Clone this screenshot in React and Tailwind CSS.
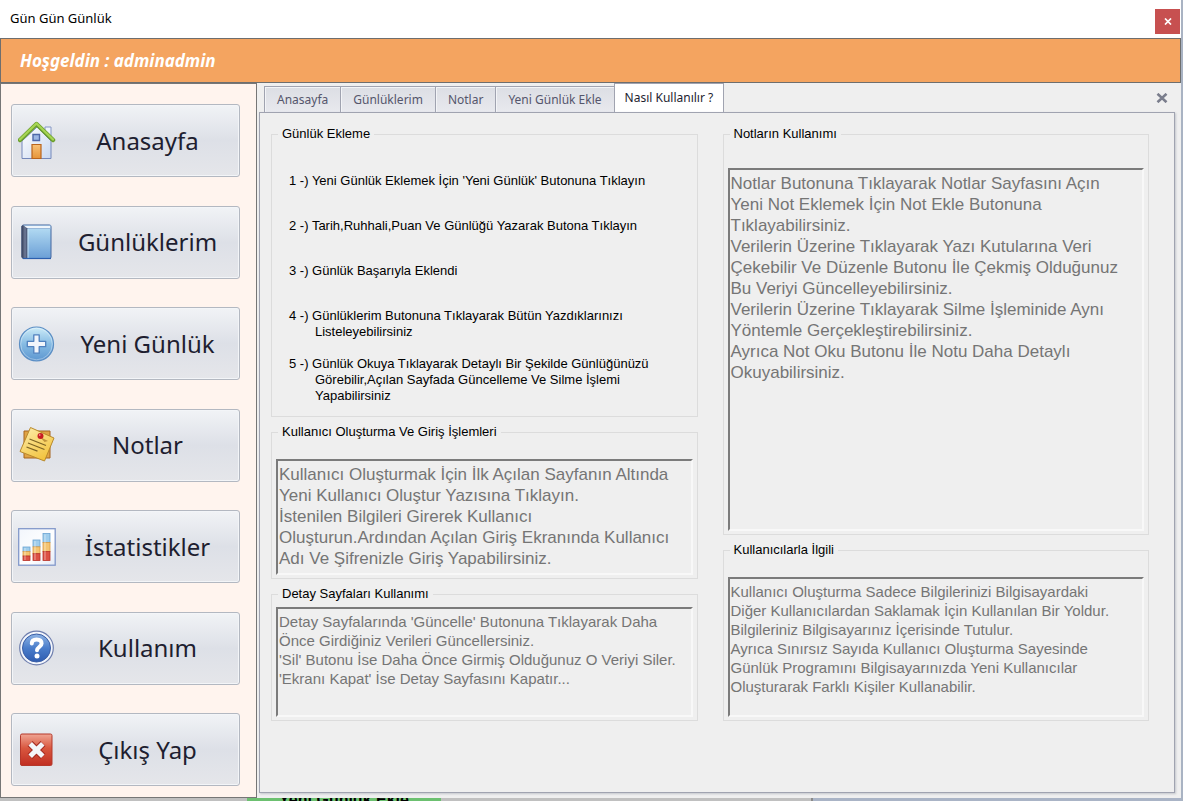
import React from "react";

function HomeIcon() {
  return (
    <svg viewBox="0 0 38 40" className="h-10 w-[38px] shrink-0" aria-hidden="true">
      <defs>
        <linearGradient id="wall" x1="0" y1="0" x2="1" y2="1">
          <stop offset="0" stopColor="#ffffff" />
          <stop offset="1" stopColor="#c9d8f0" />
        </linearGradient>
        <linearGradient id="door" x1="0" y1="0" x2="0" y2="1">
          <stop offset="0" stopColor="#f8c176" />
          <stop offset="1" stopColor="#e6953a" />
        </linearGradient>
      </defs>
      <path d="M27 6h6v12h-6z" fill="#eef3fb" stroke="#8597c4" />
      <path d="M4 20 19 6l14 14v17.5H4z" fill="url(#wall)" stroke="#7488bb" />
      <path d="M2 19 18.500 3l16.500 16" fill="none" stroke="#6a9e2b" strokeWidth="4.5" strokeLinejoin="round" strokeLinecap="round" />
      <path d="M2 18.5 18.500 2.500l16.500 16" fill="none" stroke="#a6d554" strokeWidth="2.4" strokeLinejoin="round" strokeLinecap="round" />
      <path d="M15 13.500h6.500v6H15z" fill="#9db7e4" stroke="#4f68a8" strokeWidth="1.4" />
      <path d="M14 23.500h9v14h-9z" fill="url(#door)" stroke="#b9641d" strokeWidth="1.2" />
    </svg>
  );
}

function BookIcon() {
  return (
    <svg viewBox="0 0 38 40" className="h-10 w-[38px] shrink-0" aria-hidden="true">
      <defs>
        <linearGradient id="cover" x1="0" y1="0" x2="0" y2="1">
          <stop offset="0" stopColor="#b9e0f5" />
          <stop offset="1" stopColor="#6b9fd6" />
        </linearGradient>
        <linearGradient id="spine" x1="0" y1="0" x2="1" y2="0">
          <stop offset="0" stopColor="#303a56" />
          <stop offset="0.6" stopColor="#6f7b97" />
          <stop offset="1" stopColor="#3a4666" />
        </linearGradient>
      </defs>
      <rect x="4" y="3" width="29" height="33.500" rx="1.500" fill="url(#cover)" stroke="#44669f" />
      <path d="M5 3.500h27.500v3H8z" fill="#eef5fb" stroke="#7fa3cd" strokeWidth="0.7" />
      <path d="M3.500 4.500 5 3l4.500 3.500V36.500H5L3.500 35z" fill="url(#spine)" />
      <path d="M10 7v29" stroke="#d4ecf9" strokeWidth="0.8" />
      <path d="M5 36.500h28" stroke="#2b5fae" strokeWidth="1.2" />
    </svg>
  );
}

function PlusIcon() {
  return (
    <svg viewBox="0 0 38 40" className="h-10 w-[38px] shrink-0" aria-hidden="true">
      <defs>
        <linearGradient id="disc" x1="0" y1="0" x2="0" y2="1">
          <stop offset="0" stopColor="#cdecf8" />
          <stop offset="0.5" stopColor="#86bbe3" />
          <stop offset="1" stopColor="#5c96d0" />
        </linearGradient>
      </defs>
      <circle cx="18.500" cy="20" r="17" fill="url(#disc)" stroke="#5b8ec4" strokeWidth="1.2" />
      <circle cx="18.500" cy="20" r="15.800" fill="none" stroke="#ffffff" strokeOpacity="0.35" />
      <path d="M15.800 10.800h5.400v6.500h6.500v5.400h-6.500v6.500h-5.400v-6.500H9.300v-5.400h6.500z" fill="#f1f5fb" stroke="#4f80be" strokeWidth="1.300" strokeLinejoin="round" />
    </svg>
  );
}

function NotesIcon() {
  return (
    <svg viewBox="0 0 38 40" className="h-10 w-[38px] shrink-0" aria-hidden="true">
      <defs>
        <linearGradient id="note" x1="0" y1="0" x2="0.6" y2="1">
          <stop offset="0" stopColor="#fdeeb0" />
          <stop offset="1" stopColor="#f3c43f" />
        </linearGradient>
      </defs>
      <path d="M6 6h26v27H6z" fill="#e0a345" stroke="#a5651e" />
      <path d="M12.500 2.500 36 13l-9.500 23L2 26.500z" fill="url(#note)" stroke="#b9892b" />
      <path d="m11.500 14 16.500 6.500M10 18l16.500 6.500M8.500 22l11 4.200" stroke="#7d6424" strokeWidth="1.300" />
      <path d="m22 12 8 4-3.500 1z" fill="#a87625" fillOpacity="0.7" />
      <circle cx="22.500" cy="11" r="3" fill="#c81c22" />
      <circle cx="21.700" cy="10" r="0.900" fill="#f28a86" />
    </svg>
  );
}

function ChartIcon() {
  const bars = [
    { x: 5, top: 20 },
    { x: 15, top: 13 },
    { x: 25, top: 6.5 },
  ];
  return (
    <svg viewBox="0 0 38 40" className="h-10 w-[38px] shrink-0" aria-hidden="true">
      <defs>
        <linearGradient id="paper" x1="0" y1="0" x2="1" y2="1">
          <stop offset="0" stopColor="#f2f6fc" />
          <stop offset="0.6" stopColor="#ffffff" />
          <stop offset="1" stopColor="#e3eaf6" />
        </linearGradient>
      </defs>
      <rect x="0.700" y="1.700" width="36.500" height="36.500" fill="url(#paper)" stroke="#8298ca" strokeWidth="1.300" />
      {bars.map(({ x, top }) => {
        const third = (33.5 - top) / 3;
        return (
          <g key={x}>
            <rect x={x} y={top} width="7" height={third} fill="#9fcdec" stroke="#6aa3d3" strokeWidth="0.800" />
            <rect x={x} y={top + third} width="7" height={third} fill="#f4c471" stroke="#d99b45" strokeWidth="0.800" />
            <rect x={x} y={top + 2 * third} width="7" height={third} fill="#dc5144" stroke="#b83229" strokeWidth="0.800" />
            <path d={`M${x + 2} ${top + 1}V33`} stroke="#ffffff" strokeOpacity="0.4" strokeWidth="1.200" />
          </g>
        );
      })}
    </svg>
  );
}

function HelpIcon() {
  return (
    <svg viewBox="0 0 38 40" className="h-10 w-[38px] shrink-0" aria-hidden="true">
      <defs>
        <linearGradient id="help" x1="0" y1="0" x2="0" y2="1">
          <stop offset="0" stopColor="#8fb4e4" />
          <stop offset="0.5" stopColor="#4a7dcb" />
          <stop offset="1" stopColor="#2f5cb0" />
        </linearGradient>
      </defs>
      <circle cx="18.500" cy="20" r="16.800" fill="#f3f6fc" stroke="#6f7fae" strokeWidth="1.200" />
      <circle cx="18.500" cy="20" r="14" fill="url(#help)" stroke="#3c5fa6" />
      <path d="M13.800 15.500c0-2.800 2-4 4.800-4 2.900 0 5 1.400 5 4 0 3.400-4.600 3.600-4.600 6.800" fill="none" stroke="#ffffff" strokeWidth="4" strokeLinecap="round" />
      <circle cx="19" cy="28" r="2.500" fill="#ffffff" />
    </svg>
  );
}

function ExitIcon() {
  return (
    <svg viewBox="0 0 38 40" className="h-10 w-[38px] shrink-0" aria-hidden="true">
      <defs>
        <linearGradient id="exit" x1="0" y1="0" x2="0" y2="1">
          <stop offset="0" stopColor="#f0a594" />
          <stop offset="0.450" stopColor="#d9573f" />
          <stop offset="1" stopColor="#c02e22" />
        </linearGradient>
      </defs>
      <rect x="2.500" y="4" width="31.500" height="31.500" rx="1.500" fill="url(#exit)" stroke="#b5382b" />
      <path d="m12 13.500 13 13m0-13-13 13" stroke="#a32a20" strokeWidth="7" />
      <path d="m12.200 13.700 12.600 12.600m0-12.600-12.600 12.600" stroke="#f4f5f9" strokeWidth="5" />
    </svg>
  );
}

const menu = [
  { label: "Anasayfa", Icon: HomeIcon },
  { label: "Günlüklerim", Icon: BookIcon },
  { label: "Yeni Günlük", Icon: PlusIcon },
  { label: "Notlar", Icon: NotesIcon },
  { label: "İstatistikler", Icon: ChartIcon },
  { label: "Kullanım", Icon: HelpIcon },
  { label: "Çıkış Yap", Icon: ExitIcon },
];

const tabs = ["Anasayfa", "Günlüklerim", "Notlar", "Yeni Günlük Ekle", "Nasıl Kullanılır ?"];

const userText = `Kullanıcı Oluşturmak İçin İlk Açılan Sayfanın Altında
Yeni Kullanıcı Oluştur Yazısına Tıklayın.
İstenilen Bilgileri Girerek Kullanıcı
Oluşturun.Ardından Açılan Giriş Ekranında Kullanıcı
Adı Ve Şifrenizle Giriş Yapabilirsiniz.`;

const detailText = `Detay Sayfalarında 'Güncelle' Butonuna Tıklayarak Daha
Önce Girdiğiniz Verileri Güncellersiniz.
'Sil' Butonu İse Daha Önce Girmiş Olduğunuz O Veriyi Siler.
'Ekranı Kapat' İse Detay Sayfasını Kapatır...`;

const notesText = `Notlar Butonuna Tıklayarak Notlar Sayfasını Açın
Yeni Not Eklemek İçin Not Ekle Butonuna
Tıklayabilirsiniz.
Verilerin Üzerine Tıklayarak Yazı Kutularına Veri
Çekebilir Ve Düzenle Butonu İle Çekmiş Olduğunuz
Bu Veriyi Güncelleyebilirsiniz.
Verilerin Üzerine Tıklayarak Silme İşleminide Aynı
Yöntemle Gerçekleştirebilirsiniz.
Ayrıca Not Oku Butonu İle Notu Daha Detaylı
Okuyabilirsiniz.`;

const aboutText = `Kullanıcı Oluşturma Sadece Bilgilerinizi Bilgisayardaki
Diğer Kullanıcılardan Saklamak İçin Kullanılan Bir Yoldur.
Bilgileriniz Bilgisayarınız İçerisinde Tutulur.
Ayrıca Sınırsız Sayıda Kullanıcı Oluşturma Sayesinde
Günlük Programını Bilgisayarınızda Yeni Kullanıcılar
Oluşturarak Farklı Kişiler Kullanabilir.`;

function Group({ title, className, children }) {
  return (
    <fieldset className={`min-w-0 border border-[#dcdcdc] px-1 ${className}`}>
      <legend className="ml-[2px] px-1 text-[13px] leading-4 text-black">{title}</legend>
      {children}
    </fieldset>
  );
}

function ReadBox({ label, text, className }) {
  return (
    <textarea
      aria-label={label}
      disabled
      defaultValue={text}
      className={`block w-full resize-none overflow-hidden border-2 border-t-[#7b7b7b] border-r-[#f8f8f8] border-b-[#f8f8f8] border-l-[#7b7b7b] bg-[#efefef] px-px py-[3px] text-[#757575] ${className}`}
    />
  );
}

export default function App() {
  return (
    <div className="flex min-h-screen flex-col bg-[#a9b3c3] pr-[2px] font-['Liberation_Sans',sans-serif]">
      <div className="flex flex-1 flex-col bg-[#efefef]">
        <div className="flex h-[38px] items-center justify-between bg-white pl-[10px]">
          <h1 className="font-['Noto_Sans',sans-serif] text-[13px] text-black">Gün Gün Günlük</h1>
          <button type="button" aria-label="Pencereyi kapat" className="mt-1 mr-px flex size-[25px] items-center justify-center bg-[#c75050]">
            <svg viewBox="0 0 8 7" className="h-[7px] w-2" aria-hidden="true">
              <path d="m1 .5 6 6m0-6-6 6" stroke="#ffffff" strokeWidth="1.700" />
            </svg>
          </button>
        </div>

        <header className="flex h-[45px] items-center border border-[#6e6e6e] bg-[#f4a460] pl-[19px]">
          <p className="font-['Noto_Sans',sans-serif] text-[17px] font-bold text-white italic">Hoşgeldin : adminadmin</p>
        </header>

        <div className="flex flex-1">
          <nav className="flex w-[257px] shrink-0 flex-col justify-between border border-[#767676] bg-[#fff4ee] pt-[20px] pr-[16px] pb-[11px] pl-[10px]">
            {menu.map(({ label, Icon }) => (
              <button
                key={label}
                type="button"
                className="flex h-[73px] items-center rounded-[3px] border border-[#b3b8c1] bg-linear-to-b from-[#f1f3f6] via-[#dde0e7] to-[#e5e6ea] pl-[6px] font-['Noto_Sans',sans-serif] text-2xl text-[#1e1e30] shadow-[inset_0_0_0_1px_#f3f5f8]"
              >
                <Icon />
                <span className="flex-1 text-center">{label}</span>
              </button>
            ))}
          </nav>

          <main className="flex min-w-0 flex-1 flex-col pr-[6px] pb-[5px] pl-[2px]">
            <div className="flex h-[29px] items-end justify-between pl-[5px]">
              <div role="tablist" className="flex items-end">
                {tabs.map((tab, i) =>
                  i === tabs.length - 1 ? (
                    <button key={tab} type="button" role="tab" aria-selected="true" className="h-[29px] border border-b-0 border-[#a0a3b0] bg-white px-[10px] font-['Noto_Sans',sans-serif] text-xs text-[#1e1e30]">
                      {tab}
                    </button>
                  ) : (
                    <button key={tab} type="button" role="tab" aria-selected="false" className="h-[26px] border border-r-0 border-b-0 border-[#a0a3b0] bg-linear-to-b from-[#dcdee4] to-[#e8e9ee] px-3 font-['Noto_Sans',sans-serif] text-xs text-[#55566c] shadow-[inset_1px_1px_0_#f3f4f7]">
                      {tab}
                    </button>
                  )
                )}
              </div>
              <button type="button" aria-label="Sekmeyi kapat" className="mr-[5px] flex h-[29px] w-4 items-center justify-center">
                <svg viewBox="0 0 12 10" className="h-[10px] w-3" aria-hidden="true">
                  <path d="m1.500.8 9 8.400m0-8.400-9 8.400" stroke="#7a7d8c" strokeWidth="2.600" />
                </svg>
              </button>
            </div>

            <div role="tabpanel" className="grid flex-1 grid-cols-2 items-start gap-x-[25px] border border-[#a0a3b0] pt-[13px] pr-[25px] pl-[11px] shadow-[1px_1px_2px_#c4c6cc]">
              <div className="flex flex-col gap-[7px]">
                <Group title="Günlük Ekleme" className="h-[291px] pt-[31px]">
                  <ul className="flex flex-col pl-[13px] text-[13px] leading-4 text-black">
                    <li className="mb-[29px]">1 -) Yeni Günlük Eklemek İçin 'Yeni Günlük' Butonuna Tıklayın</li>
                    <li className="mb-[29px]">2 -) Tarih,Ruhhali,Puan Ve Günlüğü Yazarak Butona Tıklayın</li>
                    <li className="mb-[29px]">3 -) Günlük Başarıyla Eklendi</li>
                    <li className="mb-4 pl-[26px] -indent-[26px]">
                      4 -) Günlüklerim Butonuna Tıklayarak Bütün Yazdıklarınızı
                      <span className="block indent-0">Listeleyebilirsiniz</span>
                    </li>
                    <li className="pl-[26px] -indent-[26px]">
                      5 -) Günlük Okuya Tıklayarak Detaylı Bir Şekilde Günlüğünüzü
                      <span className="block indent-0">
                        Görebilir,Açılan Sayfada Güncelleme Ve Silme İşlemi
                        <br />
                        Yapabilirsiniz
                      </span>
                    </li>
                  </ul>
                </Group>
                <Group title="Kullanıcı Oluşturma Ve Giriş İşlemleri" className="pt-[19px] pb-[3px]">
                  <ReadBox label="Kullanıcı Oluşturma Ve Giriş İşlemleri" text={userText} className="h-[116px] text-[17px] leading-[21px]" />
                </Group>
                <Group title="Detay Sayfaları Kullanımı" className="pt-[5px] pb-[3px]">
                  <ReadBox label="Detay Sayfaları Kullanımı" text={detailText} className="h-[110px] text-[15px] leading-[19px]" />
                </Group>
              </div>
              <div className="flex flex-col gap-[7px]">
                <Group title="Notların Kullanımı" className="pt-[26px] pb-[3px]">
                  <ReadBox label="Notların Kullanımı" text={notesText} className="h-[363px] text-[17px] leading-[21px]" />
                </Group>
                <Group title="Kullanıcılarla İlgili" className="pt-[19px] pb-[3px]">
                  <ReadBox label="Kullanıcılarla İlgili" text={aboutText} className="h-[140px] text-[15px] leading-[19px]" />
                </Group>
              </div>
            </div>
          </main>
        </div>
      </div>

      <div className="flex h-[3px] overflow-hidden bg-[#c0c0c0]">
        <div className="w-[247px] shrink-0" />
        <div className="flex h-[3px] w-[194px] shrink-0 items-center justify-center overflow-hidden bg-[#6cc070] text-base leading-4 font-bold whitespace-nowrap text-black">
          Yeni Günlük Ekle
        </div>
        <div className="w-[372px] shrink-0 border-r-2 border-[#8a8a8a]" />
        <div className="flex-1 bg-[#aab4c6]" />
      </div>
    </div>
  );
}
